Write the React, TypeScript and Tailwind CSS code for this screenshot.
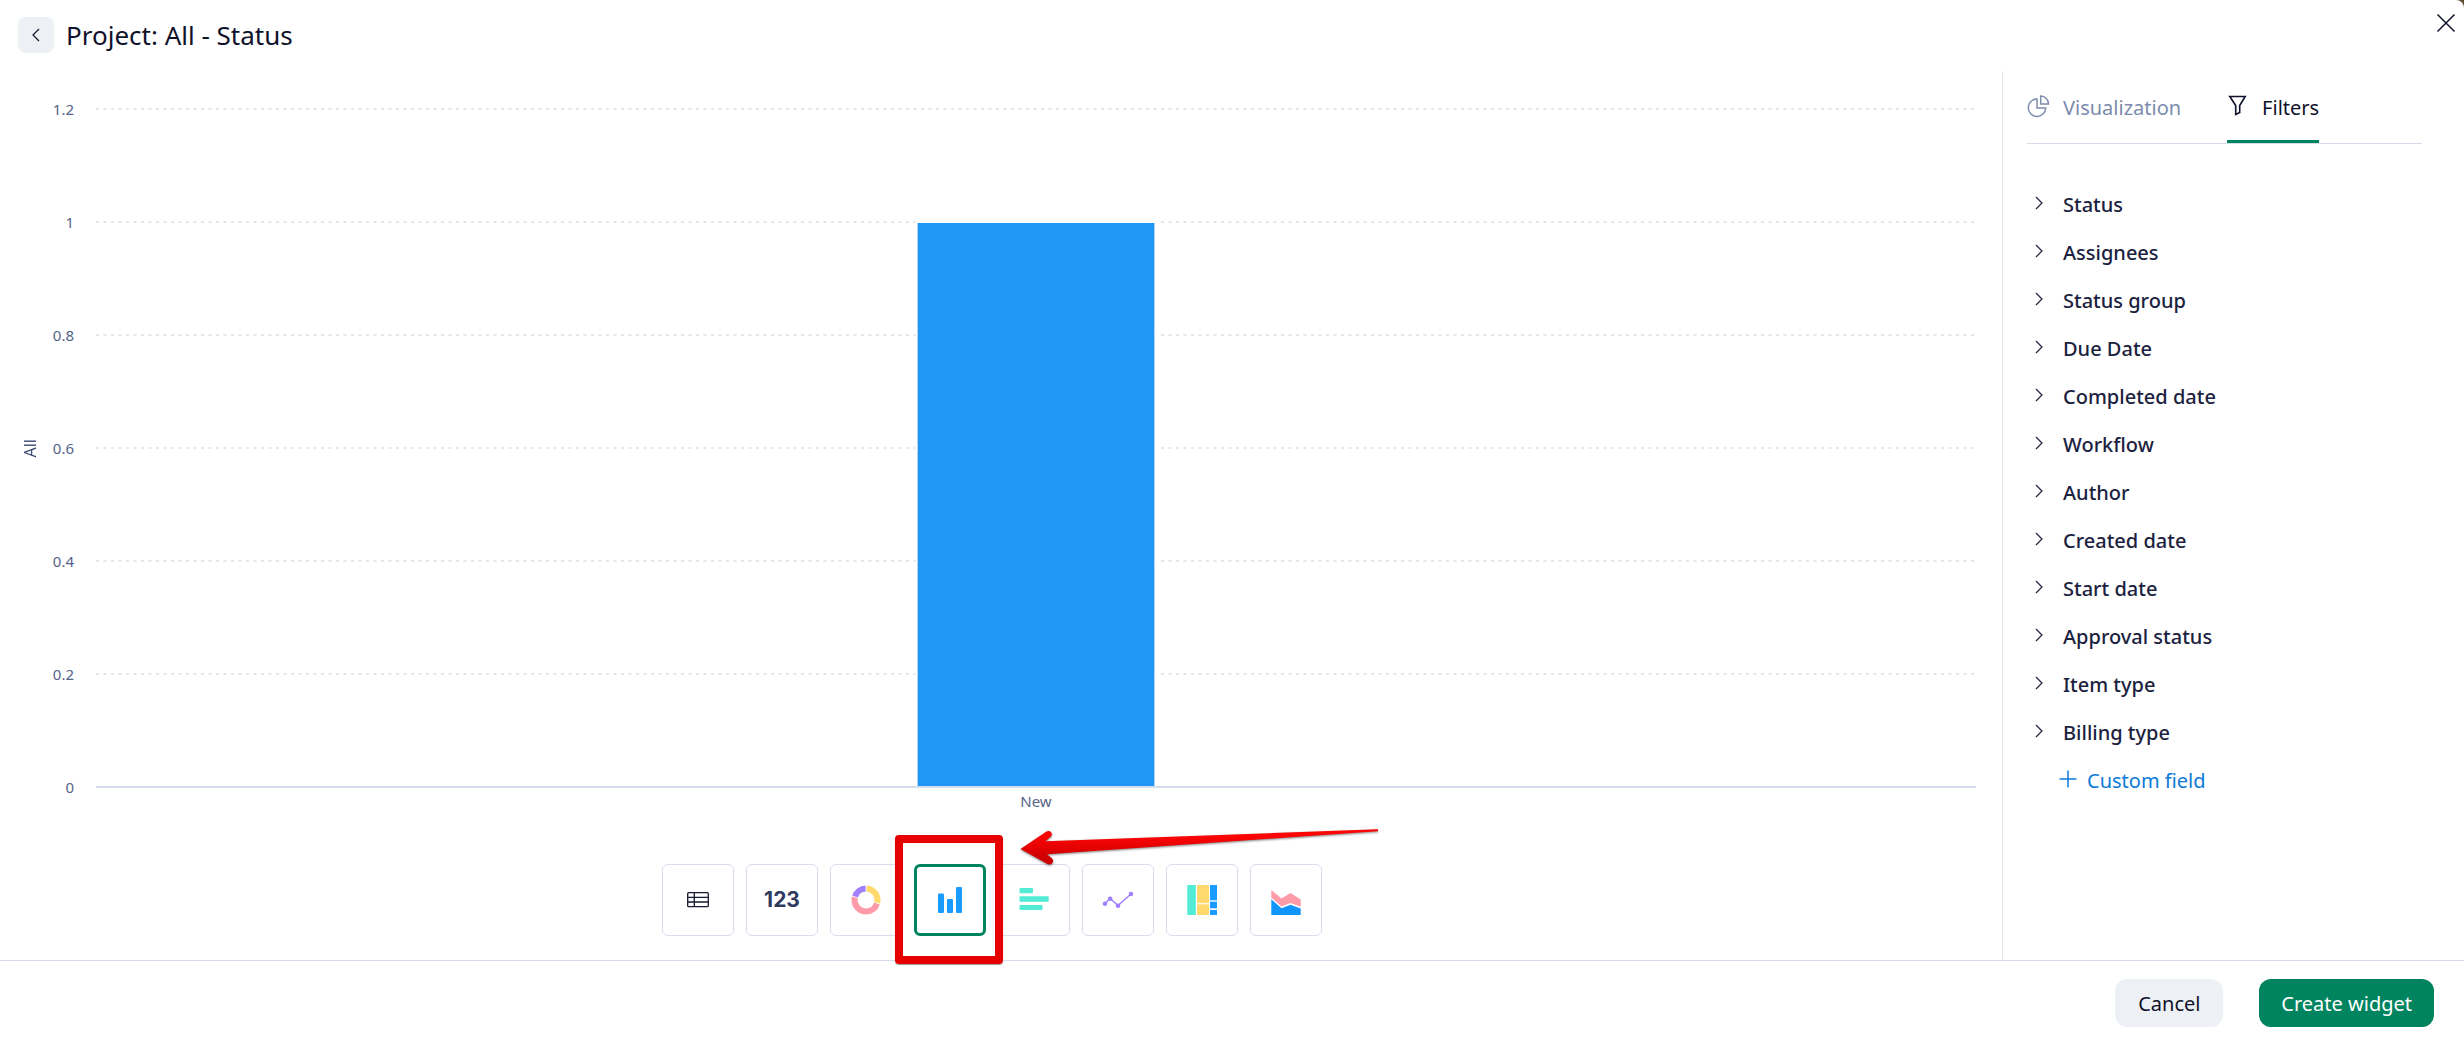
import { useState } from 'react';
import type { ReactNode } from 'react';

const FILTERS = [
  'Status',
  'Assignees',
  'Status group',
  'Due Date',
  'Completed date',
  'Workflow',
  'Author',
  'Created date',
  'Start date',
  'Approval status',
  'Item type',
  'Billing type',
];

const TICKS = [1.2, 1, 0.8, 0.6, 0.4, 0.2];
const MAX_TICK = 1.2;
const BAR_WIDTH = 12.7;

const BARS = [{ label: 'New', value: 1 }];

interface ChartType {
  id: string;
  label: string;
  icon: ReactNode;
}

const CHART_TYPES: ChartType[] = [
  {
    id: 'table',
    label: 'Table',
    icon: (
      <svg className="size-8" viewBox="0 0 32 32" fill="none" stroke="#17182f" strokeWidth={1.3}>
        <rect x="5.7" y="8.7" width="20.6" height="14" rx="1" />
        <path d="M5.7 13.3h20.6M5.7 18h20.6M12.3 8.7v14" />
      </svg>
    ),
  },
  {
    id: 'number',
    label: 'Number',
    icon: <span className="font-['Inter',sans-serif] text-[21px] font-bold text-[#2f3a5f]">123</span>,
  },
  {
    id: 'donut',
    label: 'Donut',
    icon: (
      <svg className="size-8" viewBox="0 0 32 32" fill="none" strokeWidth={6}>
        <g transform="rotate(-90 16 16)">
          <circle cx="16" cy="16" r="11.5" pathLength={360} stroke="#ffd96e" strokeDasharray="101 259" strokeDashoffset={-3} />
          <circle cx="16" cy="16" r="11.5" pathLength={360} stroke="#ff9aa8" strokeDasharray="176 184" strokeDashoffset={-108} />
          <circle cx="16" cy="16" r="11.5" pathLength={360} stroke="#a080ff" strokeDasharray="70 290" strokeDashoffset={-288} />
        </g>
      </svg>
    ),
  },
  {
    id: 'bar',
    label: 'Bar',
    icon: (
      <svg className="size-8" viewBox="0 0 32 32" fill="#1a9bff">
        <rect x="4" y="9.5" width="6" height="19.5" rx="1" />
        <rect x="13" y="15" width="6" height="14" rx="1" />
        <rect x="22" y="3" width="6" height="26" rx="1" />
      </svg>
    ),
  },
  {
    id: 'horizontal-bar',
    label: 'Horizontal bar',
    icon: (
      <svg className="size-8" viewBox="0 0 32 32" fill="#52ebd6">
        <rect x="1.5" y="4" width="13.5" height="5.2" rx="1" />
        <rect x="1.5" y="12.3" width="29.2" height="5.4" rx="1" />
        <rect x="1.5" y="21" width="23" height="5" rx="1" />
      </svg>
    ),
  },
  {
    id: 'line',
    label: 'Line',
    icon: (
      <svg className="size-8" viewBox="0 0 32 32" fill="#a080ff">
        <path d="M3 19.5 8 14.5 16 21.5 29 10" fill="none" stroke="#a080ff" strokeWidth={1.5} />
        <circle cx="3" cy="19.7" r="2.3" />
        <circle cx="8.2" cy="14.7" r="2.3" />
        <circle cx="16" cy="21.7" r="2.3" />
        <circle cx="29" cy="10" r="2.3" />
      </svg>
    ),
  },
  {
    id: 'treemap',
    label: 'Treemap',
    icon: (
      <svg className="size-8" viewBox="0 0 32 32">
        <rect x="1.3" y="1" width="8.5" height="30" fill="#52ebd6" />
        <rect x="11" y="1" width="12" height="18.2" fill="#ffd96e" />
        <rect x="11" y="20.3" width="12" height="10.7" fill="#ffd96e" />
        <rect x="24" y="1" width="7" height="15.3" fill="#1a9bff" />
        <rect x="24" y="17.7" width="7" height="6.6" fill="#1a9bff" />
        <rect x="24" y="26" width="7" height="5" fill="#1a9bff" />
      </svg>
    ),
  },
  {
    id: 'area',
    label: 'Area',
    icon: (
      <svg className="size-8" viewBox="0 0 32 32">
        <path d="M1.3 6 11.5 14.5 20.5 9 30.7 15.5V22.7L20.5 19 11.5 22.5 1.3 13.5Z" fill="#ff9aa8" />
        <path d="M1.3 15.3 11.5 24.2 20.5 20.7 30.7 24.5V31H1.3Z" fill="#1195fb" />
      </svg>
    ),
  },
];

const Chart = () => (
  <div className="mt-[38px] flex flex-1 pr-[26px] text-base text-[#56658a]">
    <div className="flex w-24 shrink-0 items-center pl-[18px]">
      <span className="rotate-180 text-[#3d4a72] [writing-mode:vertical-rl]">All</span>
    </div>
    <svg className="min-w-0 flex-1 overflow-visible" role="img" aria-label="All by status">
      {TICKS.map((tick) => {
        const y = `${(1 - tick / MAX_TICK) * 100}%`;

        return (
          <g key={tick}>
            <line x1="0" x2="100%" y1={y} y2={y} stroke="#d9deeb" strokeWidth={1.5} strokeDasharray="3 4.5" />
            <text x="-22" y={y} dy="6" textAnchor="end" fontSize={15} fill="currentColor">
              {tick}
            </text>
          </g>
        );
      })}
      {BARS.map((bar) => (
        <g key={bar.label}>
          <rect
            x={`${50 - BAR_WIDTH / 2}%`}
            y={`${(1 - bar.value / MAX_TICK) * 100}%`}
            width={`${BAR_WIDTH}%`}
            height={`${(bar.value / MAX_TICK) * 100}%`}
            fill="#2196f3"
            stroke="#ffffff"
            strokeWidth={2}
          />
          <text x="50%" y="100%" dy="20" textAnchor="middle" fontSize={15} fill="currentColor">
            {bar.label}
          </text>
        </g>
      ))}
      <line x1="0" x2="100%" y1="100%" y2="100%" stroke="#d5dcec" strokeWidth={2} />
      <text x="-22" y="100%" dy="6" textAnchor="end" fontSize={15} fill="currentColor">
        0
      </text>
    </svg>
  </div>
);

const Highlight = () => (
  <>
    <span className="pointer-events-none absolute -top-[29px] -right-[17px] -bottom-7 -left-[19px] z-10 rounded-sm border-8 border-[#e60000] shadow-[0_1px_1px_rgba(0,0,0,0.4)]" />
    <svg
      className="pointer-events-none absolute -top-[39px] left-[102px] z-10 h-11 w-[366px] drop-shadow-[0_1px_1px_rgba(0,0,0,0.5)]"
      viewBox="0 0 366 44"
    >
      <defs>
        <linearGradient id="arrow" x1="0" y1="0" x2="0" y2="1">
          <stop offset="0.2" stopColor="#fb0505" />
          <stop offset="0.8" stopColor="#d00000" />
        </linearGradient>
      </defs>
      <path
        d="M4.5 24 30.5 6.6C34 4.5 37.5 8.5 35 11.5L29.5 16.2 362 4.2V6.2L31 29.2 35.5 33C39.5 36.5 35 41 31.5 39Z"
        fill="url(#arrow)"
      />
    </svg>
  </>
);

const App = () => {
  const [chartType, setChartType] = useState('bar');

  return (
    <div className="bg-[#5f4a30]">
      <div className="flex min-h-screen flex-col rounded-tr-lg bg-white font-['Noto_Sans','Segoe_UI',sans-serif] text-xl text-[#10112b]">
        <header className="flex h-[71px] items-start justify-between pr-2 pl-[18px]">
          <div className="flex items-center gap-3 pt-[17px]">
            <button aria-label="Back" className="flex size-9 items-center justify-center rounded-lg bg-[#edf0f5]">
              <svg className="h-3.5 w-2" viewBox="0 0 8 14" fill="none" stroke="currentColor" strokeWidth={1.2}>
                <path d="M7 1 1 7l6 6" />
              </svg>
            </button>
            <h1 className="text-[26px] leading-9">Project: All - Status</h1>
          </div>
          <button aria-label="Close" className="pt-[13px]">
            <svg className="size-5" viewBox="0 0 20 20" fill="none" stroke="currentColor" strokeWidth={1.5}>
              <path d="m1.5 1.5 17 17M18.5 1.5l-17 17" />
            </svg>
          </button>
        </header>

        <main className="flex flex-1">
          <section className="flex min-w-0 flex-1 flex-col">
            <Chart />
            <div className="mt-[77px] mb-6 flex justify-center gap-3 pr-[18px]">
              {CHART_TYPES.map((type) => (
                <div key={type.id} className="relative">
                  <button
                    aria-label={type.label}
                    onClick={() => setChartType(type.id)}
                    className={`flex size-[72px] items-center justify-center rounded-md ${
                      type.id === chartType ? 'border-3 border-[#00845f]' : 'border border-[#d5dcea]'
                    }`}
                  >
                    {type.icon}
                  </button>
                  {type.id === 'bar' && <Highlight />}
                </div>
              ))}
            </div>
          </section>

          <aside className="w-[462px] shrink-0 border-l border-[#e5e5f0] pr-[42px] pl-6">
            <nav className="flex h-[73px] gap-[46px] border-b border-[#d6dbe9]">
              <button className="flex items-center gap-[13px] pt-0.5 text-[#7d8cac]">
                <svg className="mb-1 size-[23px]" viewBox="0 0 23 23" fill="none" stroke="currentColor" strokeWidth={1.5}>
                  <path d="M10 4A8.7 8.7 0 1 0 18.7 13H10Z" />
                  <path d="M13.7 1V9H21.5A8 8 0 0 0 13.7 1Z" />
                </svg>
                Visualization
              </button>
              <button className="flex items-center gap-[15px] border-b-3 border-[#00845f] pt-1">
                <svg className="mb-1 h-[21px] w-5" viewBox="0 0 20 21" fill="none" stroke="currentColor" strokeWidth={1.6}>
                  <path d="M2.8 1.5H18.2L12.7 10.5V17.5L8.7 19.5V10.5Z" />
                </svg>
                Filters
              </button>
            </nav>

            <ul className="pt-9">
              {FILTERS.map((filter) => (
                <li key={filter}>
                  <button className="flex h-12 w-full items-center gap-5 pt-0.5 pl-2 text-left font-medium text-[#1b2240]">
                    <svg className="mb-1 h-3.5 w-2" viewBox="0 0 8 14" fill="none" stroke="currentColor" strokeWidth={1.2}>
                      <path d="M1 1 7 7 1 13" />
                    </svg>
                    {filter}
                  </button>
                </li>
              ))}
            </ul>
            <button className="flex h-12 items-center gap-2.5 pt-0.5 pl-8 text-[#0d7ad8]">
              <svg className="mb-1 size-[18px]" viewBox="0 0 18 18" fill="none" stroke="currentColor" strokeWidth={1.5}>
                <path d="M9 .5v17M.5 9h17" />
              </svg>
              Custom field
            </button>
          </aside>
        </main>

        <footer className="flex justify-end gap-9 border-t border-[#d6dbe9] pt-[18px] pr-[30px] pb-3">
          <button className="h-12 min-w-[108px] rounded-xl bg-[#edf0f5] px-[22px] pt-0.5">Cancel</button>
          <button className="h-12 rounded-xl bg-[#00845f] px-[22px] pt-0.5 text-white">Create widget</button>
        </footer>
      </div>
    </div>
  );
};

export default App;
